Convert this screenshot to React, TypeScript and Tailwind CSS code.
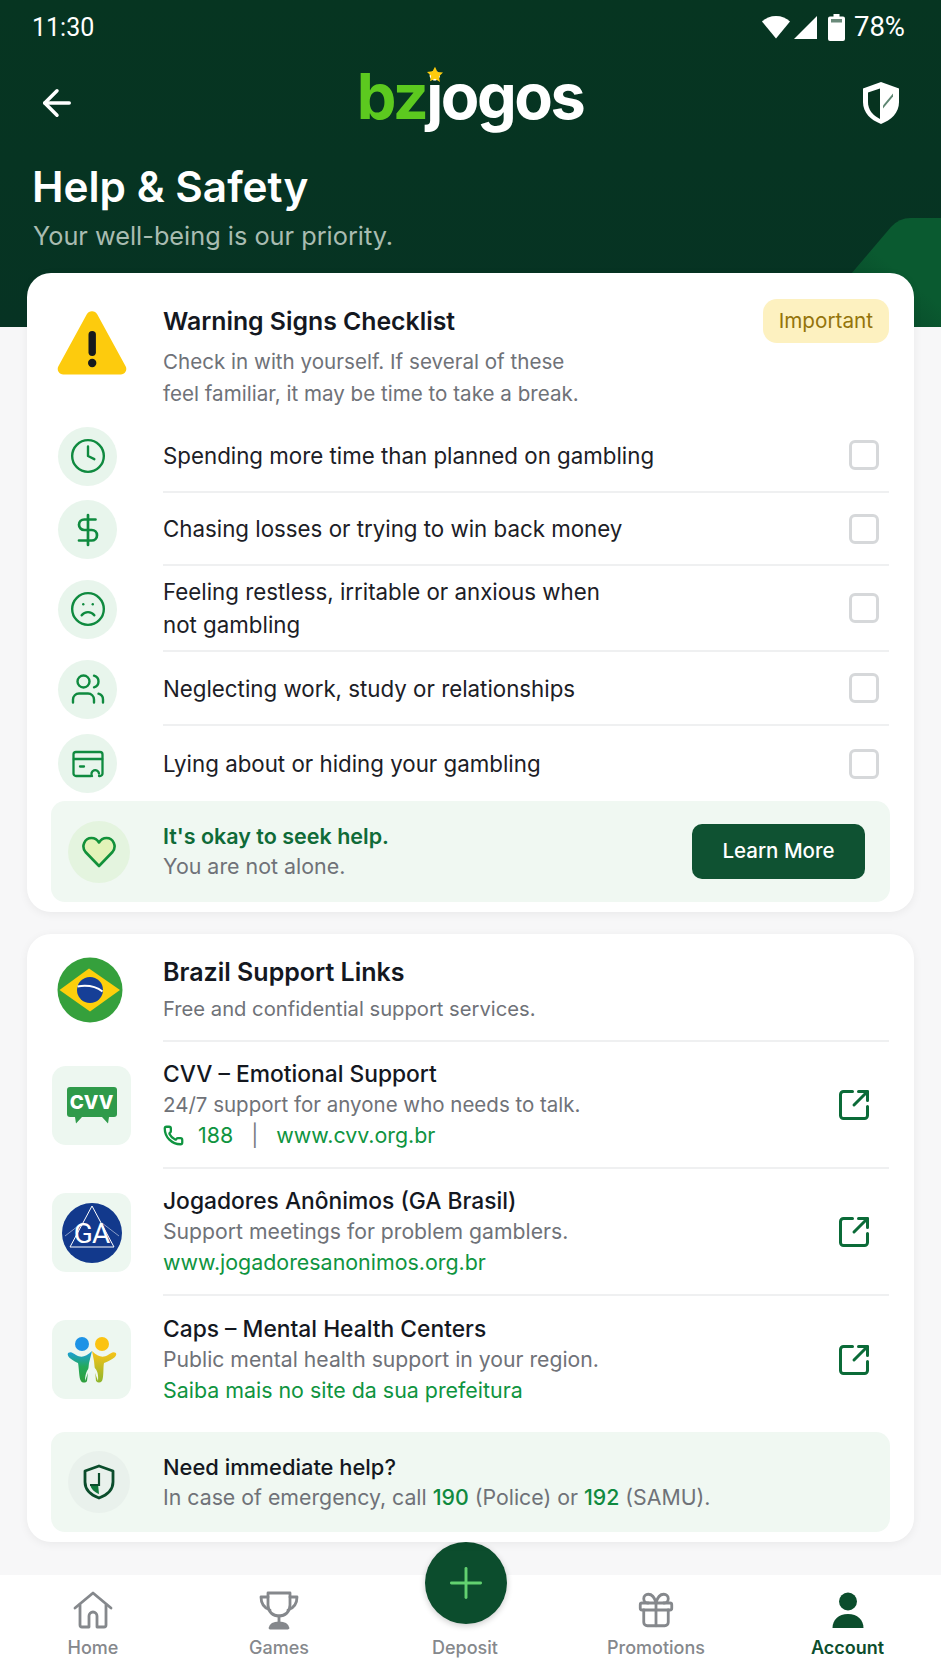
import { ArrowLeft, Clock, DollarSign, Frown, Users, SquareArrowOutUpRight, Phone, Gift, Plus } from "lucide-react";
import type { ReactNode } from "react";

const WARNING_ROWS: { icon: ReactNode; text: ReactNode; height: string; last?: boolean }[] = [
  { icon: <Clock size={38} strokeWidth={1.5} />, text: "Spending more time than planned on gambling", height: "h-[74px]" },
  { icon: <DollarSign size={36} strokeWidth={1.8} />, text: "Chasing losses or trying to win back money", height: "h-[73px]" },
  {
    icon: <Frown size={38} strokeWidth={1.5} />,
    text: (
      <>
        Feeling restless, irritable or anxious when
        <br />
        not gambling
      </>
    ),
    height: "h-[86px]",
  },
  { icon: <Users size={36} strokeWidth={1.6} />, text: "Neglecting work, study or relationships", height: "h-[74px]" },
  { icon: <CardIcon />, text: "Lying about or hiding your gambling", height: "h-[75px]", last: true },
];

function CardIcon() {
  return (
    <svg width="32" height="28" viewBox="0 0 32 28" fill="none" stroke="currentColor" strokeWidth="2.300" strokeLinecap="round" strokeLinejoin="round">
      <path d="M19 26H4a2.500 2.500 0 0 1-2.500-2.500v-19A2.500 2.500 0 0 1 4 2h24a2.500 2.500 0 0 1 2.500 2.500v19A2.500 2.500 0 0 1 28 26h-1" />
      <path d="M2 9h28" strokeWidth="2.600" />
      <path d="M8 16.500h4" />
      <path d="M20 26a3.800 3.800 0 1 1 7-2.500" />
    </svg>
  );
}

function WarningIcon() {
  return (
    <svg width="70" height="64" viewBox="0 0 70 64">
      <path d="M29.800 3.200a6 6 0 0 1 10.400 0l28.400 52a5.600 5.600 0 0 1-5 8.300H6.400a5.600 5.600 0 0 1-5-8.300z" fill="#fdcb0d" />
      <rect x="31.500" y="20" width="7.400" height="25" rx="3.700" fill="#16191d" />
      <circle cx="35.200" cy="52" r="4.200" fill="#16191d" />
    </svg>
  );
}

function StatusIcons() {
  return (
    <div className="flex items-center text-white">
      <svg width="30" height="24" viewBox="0 0 30 24" fill="white">
        <path d="M15 23.500 1 6.500C4.500 3 9.500 1 15 1s10.500 2 14 5.500z" />
      </svg>
      <svg width="25" height="25" viewBox="0 0 25 25" fill="white" className="ml-[2px]">
        <path d="M24 1v23H1z" />
      </svg>
      <svg width="17" height="27" viewBox="0 0 17 27" fill="white" className="ml-[10px]">
        <path d="M5.500 0h6v2.500H15a2 2 0 0 1 2 2V25a2 2 0 0 1-2 2H2a2 2 0 0 1-2-2V4.500a2 2 0 0 1 2-2h3.500z" />
        <rect x="3" y="5" width="11" height="3.500" fill="#6a8a7a" />
      </svg>
      <span className="ml-[9px] text-[27.500px] leading-none font-['Roboto',sans-serif]">78%</span>
    </div>
  );
}

function ShieldLogo() {
  return (
    <svg width="38" height="44" viewBox="0 0 38 44">
      <path d="M19 1 37 7.500V21c0 11-8 18-18 22C9 39 1 32 1 21V7.500z" fill="white" />
      <path d="M18 7.500 6 11.500V21c0 8 5 13.500 12 17z" fill="#06331f" />
      <path d="M31 12.500v3L21 27.500v-3z" fill="#5d8571" />
    </svg>
  );
}

function BrazilFlag() {
  return (
    <svg width="66" height="66" viewBox="0 0 66 66">
      <circle cx="33" cy="33" r="32.500" fill="#35a03c" />
      <path d="M2.500 33 32 11.500 63 33 33 54.500z" fill="#fdcf0c" />
      <circle cx="33" cy="33" r="13" fill="#163f97" />
      <path d="M20.500 29.500c9-1.500 18-.3 25 5" stroke="white" strokeWidth="2" fill="none" />
    </svg>
  );
}

function CvvLogo() {
  return (
    <div className="flex flex-col items-center">
      <div className="flex h-[30px] w-[50px] items-center justify-center rounded-[3px] bg-[#2f9a4a] text-[19px] leading-none font-extrabold text-white">CVV</div>
      <svg width="50" height="7" viewBox="0 0 50 7" fill="#2f9a4a">
        <path d="M8 0h7l-6 6.500zM35 0h7l-1 6.500z" />
      </svg>
    </div>
  );
}

function GaLogo() {
  return (
    <div className="relative flex h-[60px] w-[60px] items-center justify-center overflow-hidden rounded-full bg-[#12398c]">
      <svg width="60" height="60" viewBox="0 0 60 60" fill="none" stroke="white" strokeWidth="1" className="absolute inset-0">
        <path d="M30 3 52 44H8z" />
        <path d="M3 33 20 20M57 33 40 20" opacity=".5" />
      </svg>
      <span className="relative mt-[2px] text-[28px] leading-none tracking-[-1px] text-white font-['Roboto',sans-serif]">GA</span>
    </div>
  );
}

function CapsLogo() {
  return (
    <svg width="52" height="46" viewBox="0 0 52 46">
      <defs>
        <linearGradient id="capsLeft" x1="0" y1="0" x2="0" y2="1">
          <stop offset="0" stopColor="#1c9ee0" />
          <stop offset=".5" stopColor="#23a95a" />
          <stop offset="1" stopColor="#2f9e3c" />
        </linearGradient>
        <linearGradient id="capsRight" x1="0" y1="0" x2="0" y2="1">
          <stop offset="0" stopColor="#fcc419" />
          <stop offset="1" stopColor="#8db52c" />
        </linearGradient>
      </defs>
      <circle cx="16" cy="7" r="7" fill="#1d93e6" />
      <circle cx="36" cy="7" r="7" fill="#fbc312" />
      <path d="M2 16c3-2 5 0 8 2 5 3 10 2 16-4l-3 12-2 18c-1 2-5 2-6 0-2-2-2-14-3-18C8 24 0 20 2 16z" fill="url(#capsLeft)" />
      <path d="M50 16c-3-2-5 0-8 2-5 3-10 2-16-4l2 10 2 20c2 2 4 2 6 0 2-4 1-14 2-18 5-2 14-6 12-10z" fill="url(#capsRight)" />
      <path d="M19 44c0-8 3-14 7-14s7 6 6 14l-3-8h-7z" fill="#eef8f1" />
    </svg>
  );
}

function HomeIcon() {
  return (
    <svg width="42" height="42" viewBox="0 0 42 42" fill="none" stroke="currentColor" strokeWidth="2.800" strokeLinecap="round" strokeLinejoin="round">
      <path d="M3 19 21 4l18 15" />
      <path d="M8 16v20a2 2 0 0 0 2 2h7V27a4 4 0 0 1 8 0v11h7a2 2 0 0 0 2-2V16" />
    </svg>
  );
}

function TrophyIcon() {
  return (
    <svg width="42" height="42" viewBox="0 0 42 42" fill="none" stroke="currentColor" strokeWidth="2.800" strokeLinecap="round" strokeLinejoin="round">
      <path d="M10 4h22v12c0 7-5 11-11 11S10 23 10 16z" />
      <path d="M10 8H3c0 7 3 11 9 13M32 8h7c0 7-3 11-9 13" />
      <path d="M21 27v7" />
      <path d="M12 39c1-4 5-5 9-5s8 1 9 5z" fill="currentColor" />
    </svg>
  );
}

function SupportItem({ logo, title, sub, subSize, link, divider }: { logo: ReactNode; title: string; sub: string; subSize: string; link: ReactNode; divider?: boolean }) {
  return (
    <div className="ml-[25px] mr-[25px] flex">
      <div className="flex h-[79px] w-[79px] shrink-0 items-center justify-center self-center rounded-[14px] bg-[#edf7f0]">{logo}</div>
      <div className={`ml-[32px] flex h-[127px] flex-1 items-center ${divider ? "border-b-2 border-[#eff0f1]" : ""}`}>
        <div className="flex-1">
          <p className="text-[22.800px] leading-[30px] font-medium text-[#14181f]">{title}</p>
          <p className={`${subSize} leading-[31px] text-[#6f7278]`}>{sub}</p>
          <div className="text-[21.400px] leading-[30px] text-[#0f9440]">{link}</div>
        </div>
        <SquareArrowOutUpRight size={36} strokeWidth={2} className="mr-[17px] text-[#0b6b38]" />
      </div>
    </div>
  );
}

const NAV_ITEMS: { label: string; icon: ReactNode; width: string; active?: boolean }[] = [
  { label: "Home", width: "w-[186px]", icon: <HomeIcon /> },
  { label: "Games", width: "w-[186px]", icon: <TrophyIcon /> },
  { label: "Deposit", width: "w-[186px]", icon: <div className="h-[42px]" /> },
  { label: "Promotions", width: "w-[196px]", icon: <Gift size={42} strokeWidth={1.600} /> },
  {
    label: "Account",
    width: "flex-1",
    active: true,
    icon: (
      <svg width="32" height="42" viewBox="0 0 32 42" fill="#0b4d2c">
        <circle cx="16" cy="12.500" r="9" />
        <path d="M.5 39c0-8 6-14 15.500-14s15.500 6 15.500 14z" />
      </svg>
    ),
  },
];

export default function App() {
  return (
    <div className="relative flex h-[1672px] w-[941px] flex-col overflow-hidden bg-[#f7f7f8] font-['Inter',sans-serif]">
      <header className="relative h-[327px] shrink-0 overflow-hidden bg-gradient-to-b from-[#063521] to-[#063323] text-white">
        {/* decorative wedge bottom right */}
        <svg width="135" height="112" viewBox="0 0 135 112" className="absolute right-0 bottom-0">
          <defs>
            <linearGradient id="wedge" x1="0" y1="1" x2="1" y2="0">
              <stop offset="0" stopColor="#063a24" />
              <stop offset="0.6" stopColor="#0a5a30" />
            </linearGradient>
          </defs>
          <path d="M0 112 85 12Q93 3 105 3H135V112z" fill="url(#wedge)" />
        </svg>
        <div className="relative flex h-[54px] items-center justify-between pr-[36px] pl-[32px]">
          <span className="text-[25px] leading-none font-['Roboto',sans-serif]">11:30</span>
          <StatusIcons />
        </div>
        <div className="relative mt-[8px] flex h-[82px] items-center justify-between pr-[41px] pl-[36px]">
          <ArrowLeft size={42} strokeWidth={2} />
          <div className="relative mt-[-14px] text-[63px] leading-none font-bold tracking-[-2.500px]">
            <span className="text-[#5cc91f]">bz</span>
            <span>jogos</span>
            <svg width="18" height="17" viewBox="0 0 24 24" fill="#fdcb0d" className="absolute top-[1px] left-[69px]">
              <path d="m12 1 3.400 7.300 7.900 1-5.800 5.500 1.500 7.900L12 18l-7 3.700 1.500-7.900L.7 8.300l7.900-1z" />
            </svg>
          </div>
          <ShieldLogo />
        </div>
        <h1 className="relative mt-[18px] pl-[32px] text-[42.300px] leading-[50px] font-semibold">Help &amp; Safety</h1>
        <p className="relative mt-[8px] pl-[33px] text-[25.300px] leading-[32px] text-[#a9bcb1]">Your well-being is our priority.</p>
      </header>

      <main className="z-10 mt-[-54px] flex flex-col gap-[22px] px-[27px]">
        <section className="h-[639px] rounded-[24px] bg-white pt-[25px] shadow-[0_2px_10px_rgba(0,0,0,0.06)]">
          <div className="flex h-[121px] items-start pr-[25px] pl-[30px]">
            <div className="mt-[13px] w-[70px] shrink-0">
              <WarningIcon />
            </div>
            <div className="ml-[36px] flex-1">
              <p className="mt-[3px] text-[24.800px] leading-[40px] font-semibold text-[#14181f]">Warning Signs Checklist</p>
              <p className="mt-[5px] text-[20.600px] leading-[31.500px] text-[#6f7278]">
                Check in with yourself. If several of these
                <br />
                feel familiar, it may be time to take a break.
              </p>
            </div>
            <span className="mt-[1px] rounded-[14px] bg-[#fdf1c0] px-[16px] py-[10px] text-[20.700px] leading-[24px] text-[#94740b]">Important</span>
          </div>

          {WARNING_ROWS.map((row, i) => (
            <div key={i} className={`flex items-center pr-[25px] pl-[31px] ${row.height}`}>
              <div className="flex h-[59px] w-[59px] shrink-0 items-center justify-center rounded-full bg-[#e8f5ec] text-[#0f8a3f]">{row.icon}</div>
              <div className={`ml-[46px] flex h-full flex-1 items-center justify-between ${row.last ? "" : "border-b-2 border-[#eff0f1]"}`}>
                <p className="text-[22.300px] leading-[33px] text-[#1c2026]">{row.text}</p>
                <div className="mr-[10px] h-[30px] w-[30px] rounded-[6px] border-[3px] border-[#d6d8da] bg-white" />
              </div>
            </div>
          ))}

          <div className="mx-[24px] flex h-[101px] items-center rounded-[14px] bg-[#f0f8f2] pr-[25px] pl-[17px]">
            <div className="flex h-[62px] w-[62px] shrink-0 items-center justify-center rounded-full bg-[#e4f4df]">
              <svg width="34" height="32" viewBox="0 0 34 32" stroke="#12913a" strokeWidth="2.600" fill="#e3f3b8" strokeLinejoin="round">
                <path d="M17 30 3.500 16C-1 10.500 2.500 2 9.500 2c3.200 0 5.800 1.600 7.500 4.500C18.700 3.600 21.300 2 24.500 2c7 0 10.500 8.500 6 14z" />
              </svg>
            </div>
            <div className="ml-[33px] flex-1">
              <p className="text-[21.500px] leading-[29px] font-semibold text-[#0f6b38]">It's okay to seek help.</p>
              <p className="text-[21.400px] leading-[30px] text-[#6f7278]">You are not alone.</p>
            </div>
            <button className="h-[55px] w-[173px] rounded-[10px] bg-[#0f5232] text-[20.500px] font-medium text-white">Learn More</button>
          </div>
        </section>

        <section className="h-[608px] rounded-[24px] bg-white pt-[23px] shadow-[0_2px_10px_rgba(0,0,0,0.06)]">
          <div className="flex h-[85px] pr-[25px] pl-[30px]">
            <div className="w-[66px] shrink-0">
              <BrazilFlag />
            </div>
            <div className="ml-[40px] flex-1 border-b-2 border-[#eff0f1]">
              <p className="text-[25px] leading-[31px] font-semibold text-[#14181f]">Brazil Support Links</p>
              <p className="mt-[6px] text-[20.200px] leading-[30px] text-[#6f7278]">Free and confidential support services.</p>
            </div>
          </div>

          <SupportItem
            divider
            logo={<CvvLogo />}
            title="CVV – Emotional Support"
            sub="24/7 support for anyone who needs to talk."
            subSize="text-[20.500px]"
            link={
              <span className="flex items-center">
                <Phone size={21} strokeWidth={2.600} className="mr-[14px]" />
                <span>188</span>
                <span className="mx-[18px] text-[#7d8085]">|</span>
                <span>www.cvv.org.br</span>
              </span>
            }
          />
          <SupportItem divider logo={<GaLogo />} title="Jogadores Anônimos (GA Brasil)" sub="Support meetings for problem gamblers." subSize="text-[21.200px]" link="www.jogadoresanonimos.org.br" />
          <SupportItem logo={<CapsLogo />} title="Caps – Mental Health Centers" sub="Public mental health support in your region." subSize="text-[21.200px]" link="Saiba mais no site da sua prefeitura" />

          <div className="mx-[24px] mt-[9px] flex h-[100px] items-center rounded-[14px] bg-[#f0f8f2] pl-[17px]">
            <div className="flex h-[62px] w-[62px] shrink-0 items-center justify-center rounded-full bg-[#e9f1ec]">
              <svg width="32" height="36" viewBox="0 0 32 36" fill="none">
                <path d="M16 2 30 7v11c0 8-6 13-14 16C8 31 2 26 2 18V7z" stroke="#0b4d2c" strokeWidth="2.800" strokeLinejoin="round" />
                <path d="M7 20h8l1 10C11 28 8 25 7 20z" fill="#0f7a3c" />
                <path d="M16 9v12H7" stroke="#0b4d2c" strokeWidth="2.200" />
              </svg>
            </div>
            <div className="ml-[33px]">
              <p className="text-[21.900px] leading-[29px] font-medium text-[#14181f]">Need immediate help?</p>
              <p className="text-[21.300px] leading-[30px] text-[#6f7278]">
                In case of emergency, call <span className="font-medium text-[#0f8a3f]">190</span> (Police) or <span className="font-medium text-[#0f8a3f]">192</span> (SAMU).
              </p>
            </div>
          </div>
        </section>
      </main>

      <nav className="relative mt-auto flex h-[97px] items-start bg-white pt-[14px]">
        <button className="absolute top-[-33px] left-[425px] flex h-[82px] w-[82px] items-center justify-center rounded-full bg-[#0c4d2d] text-[#62d170] shadow-[0_2px_6px_rgba(0,0,0,0.2)]">
          <Plus size={50} strokeWidth={1.400} />
        </button>
        {NAV_ITEMS.map((item) => (
          <div key={item.label} className={`flex flex-col items-center ${item.width} ${item.active ? "text-[#0b4d2c]" : "text-[#85888c]"}`}>
            {item.icon}
            <span className={`mt-[5px] text-[18px] leading-[24px] ${item.active ? "font-semibold" : "font-medium"}`}>{item.label}</span>
          </div>
        ))}
      </nav>
    </div>
  );
}
